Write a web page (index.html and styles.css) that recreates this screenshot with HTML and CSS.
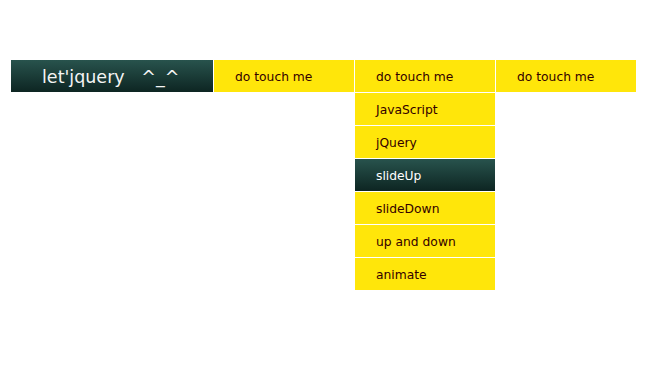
FILE: index.html
```html
<!DOCTYPE html>
<html>
<head>
<meta charset="utf-8">
<link rel="stylesheet" href="styles.css">
</head>
<body>
<div class="nav">
  <div class="logo">let'jquery&nbsp;&nbsp;&nbsp;^_^</div>
  <div class="col">
    <div class="item">do touch me</div>
  </div>
  <div class="col">
    <div class="item">do touch me</div>
    <ul class="sub">
      <li>JavaScript</li>
      <li>jQuery</li>
      <li class="active">slideUp</li>
      <li>slideDown</li>
      <li>up and down</li>
      <li>animate</li>
    </ul>
  </div>
  <div class="col last">
    <div class="item">do touch me</div>
  </div>
</div>
</body>
</html>
```
FILE: styles.css
```css
* { box-sizing: border-box; }
html, body { margin: 0; padding: 0; background: #fff; }
body {
  font-family: "DejaVu Sans", Verdana, sans-serif;
  font-size: 12.3px;
  color: #330000;
}
.nav {
  margin: 60px 0 0 11px;
  display: flex;
  align-items: flex-start;
}
.logo {
  width: 203px;
  height: 32px;
  border-right: 1px solid #fff;
  background: linear-gradient(#28534d, #0d2522);
  background-clip: padding-box;
  color: #f4f4f4;
  font-size: 17.5px;
  line-height: 34px;
  padding-left: 31px;
  white-space: nowrap;
  overflow: hidden;
}
.col {
  width: 141px;
  display: flex;
  flex-direction: column;
  border-right: 1px solid #fff;
}
.col.last { border-right: none; width: 140px; }
.item {
  height: 33px;
  border-bottom: 1px solid #fff;
  background: #ffe60a;
  background-clip: padding-box;
  line-height: 34px;
  padding-left: 21px;
  overflow: hidden;
}
.sub {
  list-style: none;
  margin: 0;
  padding: 0;
  width: 140px;
}
.sub li {
  height: 33px;
  line-height: 34px;
  padding-left: 21px;
  background: #ffe60a;
  border-bottom: 1px solid #fff;
  background-clip: padding-box;
  overflow: hidden;
}
.sub li.active {
  background: linear-gradient(#28534d, #0d2522);
  background-clip: padding-box;
  color: #fff;
}
```
